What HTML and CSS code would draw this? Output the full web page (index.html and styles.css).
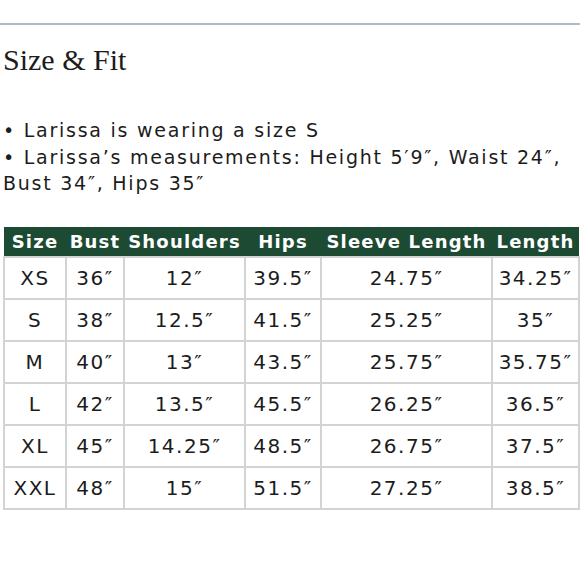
FILE: index.html
```html
<!DOCTYPE html>
<html>
<head>
<meta charset="utf-8">
<link rel="stylesheet" href="styles.css">
</head>
<body>
<div class="page">
  <hr class="rule">
  <h1 class="title">Size &amp; Fit</h1>
  <ul class="notes">
    <li>• Larissa is wearing a size S</li>
    <li>• Larissa’s measurements: Height 5′9″, Waist 24″, Bust 34″, Hips 35″</li>
  </ul>
  <table class="sizes">
    <colgroup>
      <col class="c1"><col class="c2"><col class="c3"><col class="c4"><col class="c5"><col class="c6">
    </colgroup>
    <thead>
      <tr><th>Size</th><th>Bust</th><th>Shoulders</th><th>Hips</th><th>Sleeve Length</th><th>Length</th></tr>
    </thead>
    <tbody>
      <tr><td>XS</td><td>36″</td><td>12″</td><td>39.5″</td><td>24.75″</td><td>34.25″</td></tr>
      <tr><td>S</td><td>38″</td><td>12.5″</td><td>41.5″</td><td>25.25″</td><td>35″</td></tr>
      <tr><td>M</td><td>40″</td><td>13″</td><td>43.5″</td><td>25.75″</td><td>35.75″</td></tr>
      <tr><td>L</td><td>42″</td><td>13.5″</td><td>45.5″</td><td>26.25″</td><td>36.5″</td></tr>
      <tr><td>XL</td><td>45″</td><td>14.25″</td><td>48.5″</td><td>26.75″</td><td>37.5″</td></tr>
      <tr><td>XXL</td><td>48″</td><td>15″</td><td>51.5″</td><td>27.25″</td><td>38.5″</td></tr>
    </tbody>
  </table>
</div>
</body>
</html>
```
FILE: styles.css
```css
html, body {
  margin: 0;
  padding: 0;
  background: #ffffff;
}
.page {
  width: 580px;
  height: 580px;
  overflow: hidden;
  padding-top: 23px;
  box-sizing: border-box;
  color: #1a1a1a;
}
.rule {
  margin: 0;
  border: 0;
  height: 2px;
  background: #aebcc6;
}
.title {
  margin: 18px 0 0 3px;
  font-family: "Liberation Serif", serif;
  font-weight: 400;
  font-size: 30px;
  line-height: 34px;
  color: #1c1c1c;
}
.notes {
  list-style: none;
  margin: 40px 0 0 3px;
  padding: 0;
  font-family: "DejaVu Sans", sans-serif;
  font-size: 19px;
  letter-spacing: 1.75px;
  line-height: 26.5px;
  color: #1c1c1c;
  width: 575px;
}
.notes li {
  margin: 0;
}
.sizes {
  margin: 30px 0 0 3px;
  border-collapse: collapse;
  table-layout: fixed;
  width: 575px;
  font-family: "DejaVu Sans", sans-serif;
}
.c1 { width: 62px; }
.c2 { width: 58px; }
.c3 { width: 121px; }
.c4 { width: 76px; }
.c5 { width: 171px; }
.c6 { width: 87px; }
.sizes th {
  background: #1d4a33;
  color: #ffffff;
  font-weight: 700;
  font-size: 18px;
  letter-spacing: 1.2px;
  height: 29px;
  padding: 0;
  text-align: center;
  white-space: nowrap;
  border: 0;
}
.sizes td {
  border: 2px solid #d3d3d3;
  height: 40px;
  padding: 0;
  text-align: center;
  font-size: 20px;
  letter-spacing: 1.5px;
  color: #1c1c1c;
  white-space: nowrap;
}
```
